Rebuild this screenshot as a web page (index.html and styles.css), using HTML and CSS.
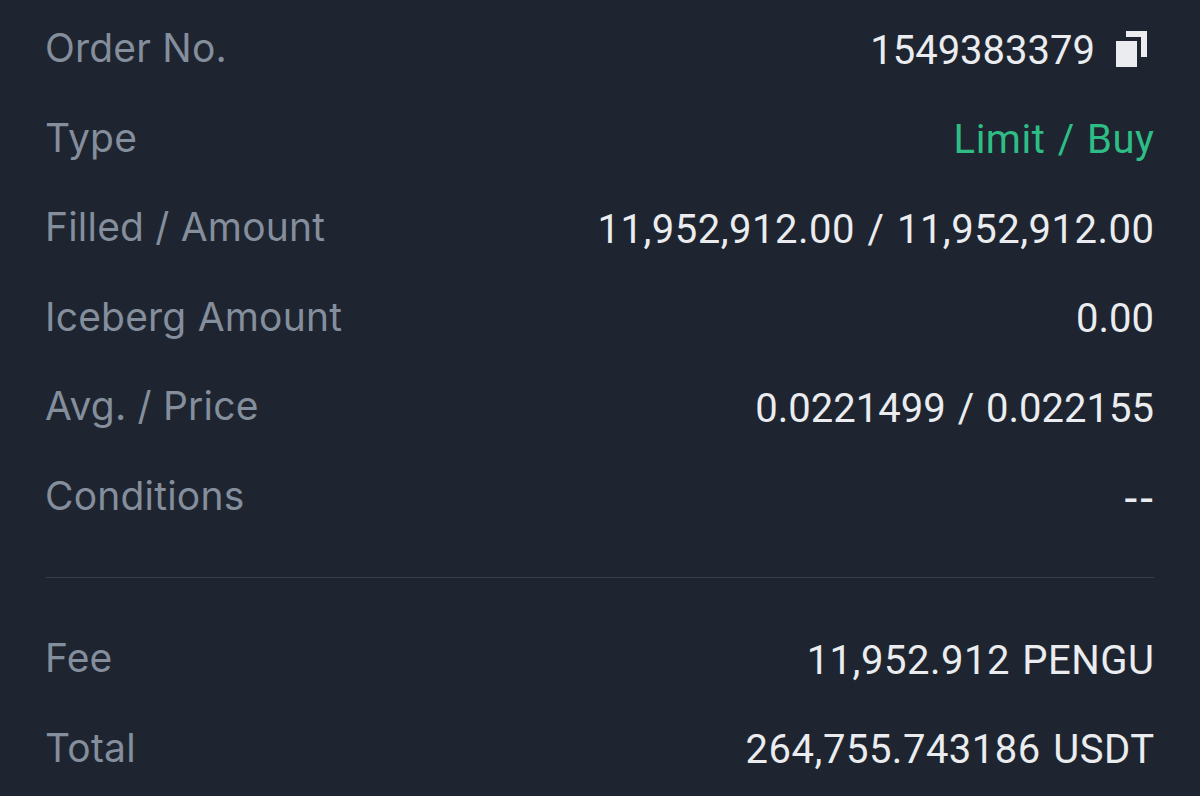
FILE: index.html
```html
<!DOCTYPE html>
<html lang="en">
<head>
  <meta charset="UTF-8">
  <title>Order details</title>
  <link rel="stylesheet" href="styles.css">
</head>
<body>
  <div class="details">
    <div class="row">
      <span class="label">Order No.</span>
      <span class="value">1549383379
        <svg class="copy" width="31" height="36" viewBox="0 0 31 36"><path d="M10 0h21v26h-6V6H10z" fill="#eaecef"/><rect x="0" y="10" width="21" height="26" fill="#eaecef"/></svg>
      </span>
    </div>
    <div class="row"><span class="label">Type</span><span class="value spaced buy">Limit / Buy</span></div>
    <div class="row"><span class="label">Filled / Amount</span><span class="value spaced">11,952,912.00 / 11,952,912.00</span></div>
    <div class="row"><span class="label">Iceberg Amount</span><span class="value">0.00</span></div>
    <div class="row"><span class="label">Avg. / Price</span><span class="value">0.0221499 / 0.022155</span></div>
    <div class="row"><span class="label">Conditions</span><span class="value dashes">--</span></div>
    <hr class="divider">
    <div class="row"><span class="label">Fee</span><span class="value spaced">11,952.912 PENGU</span></div>
    <div class="row"><span class="label">Total</span><span class="value spaced">264,755.743186 USDT</span></div>
  </div>
</body>
</html>
```
FILE: styles.css
```css
html, body {
  height: 100%;
}

body {
  margin: 0;
  background: #1e2530;
  font-family: 'Roboto', sans-serif;
  overflow: hidden;
}

.details {
  padding: 4px 46px 0;
}

.row {
  display: flex;
  justify-content: space-between;
  align-items: center;
  height: 89.5px;
}

.label {
  color: #848e9c;
  font-family: 'Inter', sans-serif;
  font-size: 39px;
  letter-spacing: 0.2px;
  margin-left: -1px;
  padding-bottom: 2px;
}

.value {
  color: #eaecef;
  font-size: 40px;
  word-spacing: 2px;
  padding-top: 3px;
  display: flex;
  align-items: center;
  gap: 21px;
}

.spaced {
  letter-spacing: 0.5px;
  margin-right: -0.5px;
}

.dashes {
  font-size: 46px;
  letter-spacing: 3px;
  margin-right: -2px;
}

.buy {
  color: #2ebd85;
}

.copy {
  margin-right: 7px;
  margin-top: -3px;
}

.divider {
  border: 0;
  border-top: 1px solid #363d48;
  margin: 36px 0 36px;
}
```
